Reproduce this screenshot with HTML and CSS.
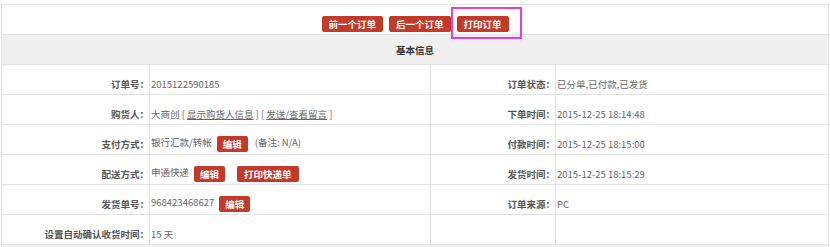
FILE: index.html
```html
<!DOCTYPE html>
<html lang="zh-CN">
<head>
  <meta charset="UTF-8" />
  <title>订单信息</title>
  <link rel="stylesheet" href="styles.css">
</head>
<body>
  <div class="wrap">
    <table class="info">
      <colgroup>
        <col class="c1"><col class="c2"><col class="c3"><col class="c4">
      </colgroup>
      <tr>
        <td colspan="4" class="toolbar">
          <span class="btn">前一个订单</span>
          <span class="btn">后一个订单</span>
          <span class="btn">打印订单</span>
        </td>
      </tr>
      <tr>
        <th colspan="4" class="head">基本信息</th>
      </tr>
      <tr>
        <td class="label">订单号：</td>
        <td class="value">2015122590185</td>
        <td class="label">订单状态：</td>
        <td class="value">已分单,已付款,已发货</td>
      </tr>
      <tr>
        <td class="label">购货人：</td>
        <td class="value">大商创 [ <a href="#">显示购货人信息</a> ] [ <a href="#">发送/查看留言</a> ]</td>
        <td class="label">下单时间：</td>
        <td class="value">2015-12-25 18:14:48</td>
      </tr>
      <tr>
        <td class="label">支付方式：</td>
        <td class="value">银行汇款/转帐<span class="btn small">编辑</span><span class="note">(备注: N/A)</span></td>
        <td class="label">付款时间：</td>
        <td class="value">2015-12-25 18:15:00</td>
      </tr>
      <tr>
        <td class="label">配送方式：</td>
        <td class="value">申通快递<span class="btn small">编辑</span><span class="btn small wide">打印快递单</span></td>
        <td class="label">发货时间：</td>
        <td class="value">2015-12-25 18:15:29</td>
      </tr>
      <tr>
        <td class="label">发货单号：</td>
        <td class="value">968423468627<span class="btn small">编辑</span></td>
        <td class="label">订单来源：</td>
        <td class="value">PC</td>
      </tr>
      <tr>
        <td class="label">设置自动确认收货时间：</td>
        <td class="value">15 天</td>
        <td class="label"></td>
        <td class="value"></td>
      </tr>
      <tr>
        <th colspan="4" class="head next"></th>
      </tr>
    </table>
    <div class="mark"></div>
  </div>
</body>
</html>
```

FILE: styles.css
```css
body {
  margin: 0;
  font-family: "Noto Sans CJK SC", sans-serif;
  font-size: 9.5px;
  color: #666;
  background: #fff;
}
.wrap {
  position: relative;
  padding: 4px 2px 0 1px;
}
.info {
  width: 827px;
  border-collapse: collapse;
  table-layout: fixed;
}
.c1 { width: 148px; }
.c2 { width: 281px; }
.c3 { width: 125px; }
.c4 { width: 273px; }
.info td, .info th {
  border: 1px solid #e3e3e3;
  height: 30px;
  box-sizing: border-box;
  white-space: nowrap;
}
.toolbar {
  text-align: center;
  padding: 8px 0 0;
  font-size: 0;
}
.toolbar .btn {
  font-size: 9.5px;
  margin: 0 3px;
}
.head {
  background: #f0f0f0;
  color: #333;
  font-weight: bold;
  text-align: center;
  padding: 0;
}
.label {
  text-align: right;
  font-weight: bold;
  color: #555;
  padding: 8px 0 0;
}
.value {
  padding: 8px 0 0 1px;
}
.value a {
  color: #666;
  text-decoration: underline;
}
.btn {
  display: inline-block;
  height: 16px;
  line-height: 16px;
  padding: 0 7px;
  border-radius: 2px;
  background: #c33a2b;
  color: #fff;
  font-weight: bold;
  vertical-align: middle;
}
.small {
  margin-left: 5px;
  padding: 0 6px;
}
.small.wide {
  margin-left: 12px;
  padding: 0 7px;
}
.note {
  margin-left: 7px;
}
.mark {
  position: absolute;
  left: 451px;
  top: 7px;
  width: 71px;
  height: 32px;
  border: 2px solid #e03ee0;
  box-sizing: border-box;
}
```
